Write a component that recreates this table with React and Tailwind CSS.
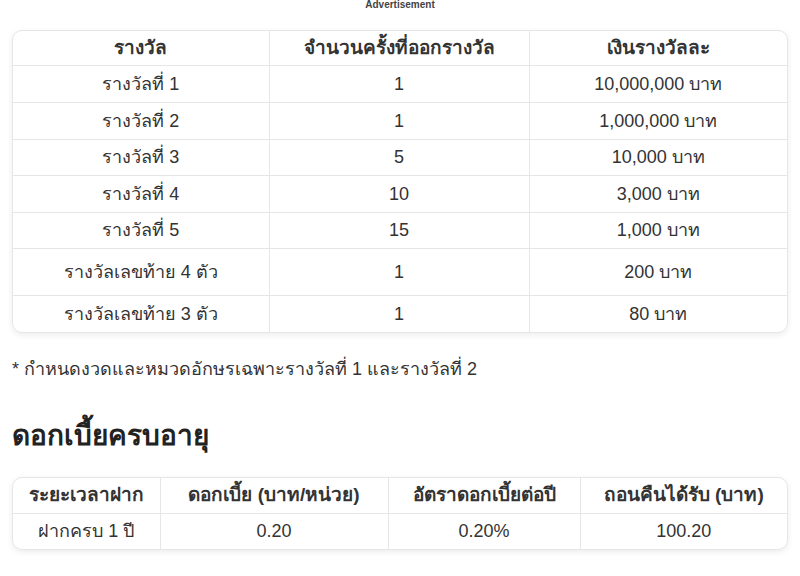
import React from 'react';

const prizes = [
  { name: 'รางวัลที่ 1', count: '1', amount: '10,000,000 บาท', h: 'h-[37px]' },
  { name: 'รางวัลที่ 2', count: '1', amount: '1,000,000 บาท', h: 'h-[37px]' },
  { name: 'รางวัลที่ 3', count: '5', amount: '10,000 บาท', h: 'h-[36px]' },
  { name: 'รางวัลที่ 4', count: '10', amount: '3,000 บาท', h: 'h-[37px]' },
  { name: 'รางวัลที่ 5', count: '15', amount: '1,000 บาท', h: 'h-[36px]' },
  { name: 'รางวัลเลขท้าย 4 ตัว', count: '1', amount: '200 บาท', h: 'h-[47px]' },
  { name: 'รางวัลเลขท้าย 3 ตัว', count: '1', amount: '80 บาท', h: 'h-[37px]' },
];

export default function App() {
  return (
    <div className="w-[800px] h-[576px] bg-white text-[#333] overflow-hidden px-3" style={{ fontFamily: '"Liberation Sans", Arial, sans-serif' }}>
      {/* AD LABEL */}
      <div className="h-[30px] text-center text-[10px] font-bold text-[#444] leading-[10px]">Advertisement</div>

      {/* PRIZE TABLE */}
      <div className="rounded-[10px] border border-[#e6e6e6] shadow-[0_2px_6px_rgba(0,0,0,0.08)] overflow-hidden">
        <table className="w-full border-collapse table-fixed">
          <colgroup>
            <col className="w-[256px]" />
            <col className="w-[260px]" />
            <col />
          </colgroup>
          <thead>
            <tr className="h-[34px]">
              <th className="text-[19px] leading-[22px] font-bold text-center border-r border-[#e6e6e6]">รางวัล</th>
              <th className="text-[19px] leading-[22px] font-bold text-center border-r border-[#e6e6e6]">จำนวนครั้งที่ออกรางวัล</th>
              <th className="text-[19px] leading-[22px] font-bold text-center">เงินรางวัลละ</th>
            </tr>
          </thead>
          <tbody>
            {prizes.map((p) => (
              <tr key={p.name} className={`${p.h} border-t border-[#e6e6e6]`}>
                <td className="text-[18px] leading-[22px] text-center border-r border-[#e6e6e6]">{p.name}</td>
                <td className="text-[18px] leading-[22px] text-center border-r border-[#e6e6e6]">{p.count}</td>
                <td className="text-[18px] leading-[22px] text-center">{p.amount}</td>
              </tr>
            ))}
          </tbody>
        </table>
      </div>

      <p className="mt-[26px] text-[18px] leading-[20px]">* กำหนดงวดและหมวดอักษรเฉพาะรางวัลที่ 1 และรางวัลที่ 2</p>

      <h2 className="mt-[41px] text-[28px] font-bold leading-[32px] text-[#222]">ดอกเบี้ยครบอายุ</h2>

      {/* INTEREST TABLE */}
      <div className="mt-[25px] rounded-[10px] border border-[#e6e6e6] shadow-[0_2px_6px_rgba(0,0,0,0.08)] overflow-hidden">
        <table className="w-full border-collapse table-fixed">
          <colgroup>
            <col className="w-[147px]" />
            <col className="w-[228px]" />
            <col className="w-[192px]" />
            <col />
          </colgroup>
          <thead>
            <tr className="h-[35px]">
              <th className="text-[19px] leading-[22px] font-bold text-center border-r border-[#e6e6e6]">ระยะเวลาฝาก</th>
              <th className="text-[19px] leading-[22px] font-bold text-center border-r border-[#e6e6e6]">ดอกเบี้ย (บาท/หน่วย)</th>
              <th className="text-[19px] leading-[22px] font-bold text-center border-r border-[#e6e6e6]">อัตราดอกเบี้ยต่อปี</th>
              <th className="text-[19px] leading-[22px] font-bold text-center">ถอนคืนได้รับ (บาท)</th>
            </tr>
          </thead>
          <tbody>
            <tr className="h-[36px] border-t border-[#e6e6e6]">
              <td className="text-[18px] leading-[22px] text-center border-r border-[#e6e6e6]">ฝากครบ 1 ปี</td>
              <td className="text-[18px] leading-[22px] text-center border-r border-[#e6e6e6]">0.20</td>
              <td className="text-[18px] leading-[22px] text-center border-r border-[#e6e6e6]">0.20%</td>
              <td className="text-[18px] leading-[22px] text-center">100.20</td>
            </tr>
          </tbody>
        </table>
      </div>
    </div>
  );
}
